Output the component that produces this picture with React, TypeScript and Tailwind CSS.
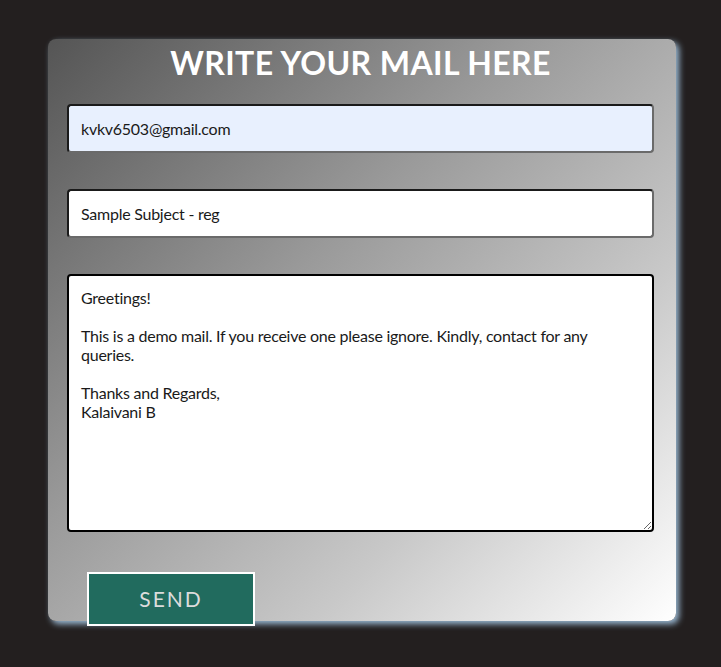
import { useState } from "react";

export default function App() {
  const [to, setTo] = useState("kvkv6503@gmail.com");
  const [subject, setSubject] = useState("Sample Subject - reg");
  const [body, setBody] = useState(
    "Greetings!\n\nThis is a demo mail. If you receive one please ignore. Kindly, contact for any queries.\n\nThanks and Regards,\nKalaivani B"
  );

  return (
    <div className="w-full h-[667px] bg-[#231f1f] pt-[39px] overflow-hidden font-['Lato','Open_Sans',sans-serif]">
      {/* Mail card */}
      <form
        onSubmit={(e) => e.preventDefault()}
        className="ml-[48px] w-[628px] h-[582px] rounded-[8px] bg-[linear-gradient(135deg,#555555_0%,#9a9a9a_40%,#c8c8c8_70%,#ffffff_100%)] shadow-[3px_3px_6px_rgba(170,205,235,0.9)] pl-[19px] pr-[22px] pt-[6px] flex flex-col"
      >
        <h1 className="shrink-0 text-center text-white text-[32px] font-bold leading-[36px] tracking-[0.4px]">
          WRITE YOUR MAIL HERE
        </h1>

        <input
          value={to}
          onChange={(e) => setTo(e.target.value)}
          className="shrink-0 mt-[23px] h-[49px] w-full rounded-[4px] border-2 border-t-[#1a1a1a] border-l-[#1a1a1a] border-b-[#6a6a6a] border-r-[#6a6a6a] bg-[#e8f0fe] px-[12px] text-[16px] tracking-[-0.25px] text-[#1a1a1a] outline-none"
        />

        <input
          value={subject}
          onChange={(e) => setSubject(e.target.value)}
          className="shrink-0 mt-[36px] h-[49px] w-full rounded-[4px] border-2 border-t-[#1a1a1a] border-l-[#1a1a1a] border-b-[#6a6a6a] border-r-[#6a6a6a] bg-white px-[12px] text-[16px] tracking-[-0.25px] text-[#1a1a1a] outline-none"
        />

        <textarea
          value={body}
          onChange={(e) => setBody(e.target.value)}
          className="shrink-0 mt-[36px] h-[258px] w-full rounded-[4px] border-2 border-black bg-white px-[12px] pt-[12px] text-[16px] leading-[19px] tracking-[-0.25px] text-[#1a1a1a] outline-none resize-y"
        />

        <div className="shrink-0 mt-[40px] pl-[20px]">
          <button
            type="submit"
            className="w-[168px] h-[54px] border-2 border-white bg-[#216b5e] text-[#dcdcdc] text-[21px] tracking-[2px] cursor-pointer"
          >
            SEND
          </button>
        </div>
      </form>
    </div>
  );
}
